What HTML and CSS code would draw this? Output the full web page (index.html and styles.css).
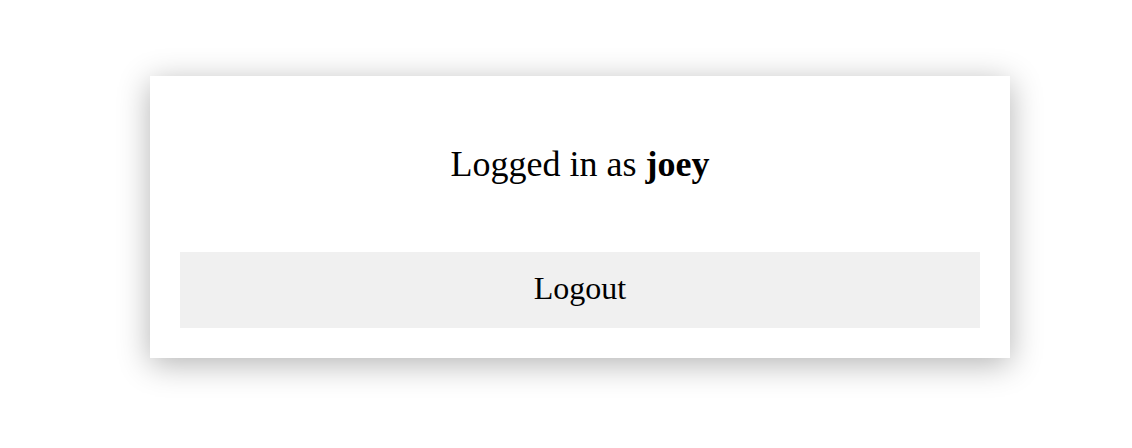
FILE: index.html
```html
<!DOCTYPE html>
<html>
<head>
<meta charset="utf-8">
<link rel="stylesheet" href="styles.css">
</head>
<body>
<div class="page">
  <div class="card">
    <div class="status">Logged in as <b>joey</b></div>
    <button class="logout">Logout</button>
  </div>
</div>
</body>
</html>
```
FILE: styles.css
```css
html, body {
  margin: 0;
  padding: 0;
  background: #fff;
}
.page {
  padding: 76px 0 90px 150px;
}
.card {
  width: 860px;
  box-sizing: border-box;
  padding: 30px;
  background: #fff;
  box-shadow: 0 6px 30px rgba(0, 0, 0, 0.3);
  display: flex;
  flex-direction: column;
  font-family: "Liberation Serif", "Times New Roman", serif;
  color: #000;
}
.status {
  font-size: 36px;
  line-height: 41px;
  text-align: center;
  margin: 38px 0 67px;
}
.status b {
  font-weight: bold;
}
.logout {
  height: 76px;
  border: none;
  background: #f0f0f0;
  font-family: "Liberation Serif", "Times New Roman", serif;
  font-size: 32px;
  color: #000;
  padding: 0 0 4px;
}
```
